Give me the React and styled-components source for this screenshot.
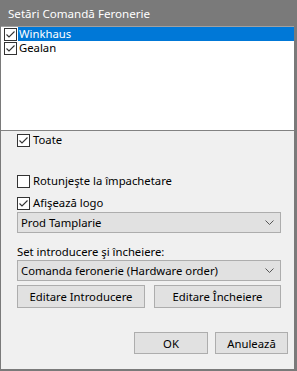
import styled, { createGlobalStyle } from 'styled-components';

const GlobalStyle = createGlobalStyle`
  body {
    margin: 0;
    font-family: "Segoe UI", "Noto Sans", sans-serif;
    font-size: 11.3px;
  }
`;

const Window = styled.div`
  width: 297px;
  height: 371px;
  box-sizing: border-box;
  background: #7a7a7a;
  padding: 0 3px 2px 1px;
  display: flex;
  flex-direction: column;
`;

const TitleBar = styled.div`
  height: 26px;
  flex-shrink: 0;
  display: flex;
  align-items: center;
  padding-left: 7px;
  color: #ffffff;
  font-size: 11.6px;
`;

const Body = styled.div`
  flex: 1;
  background: #f0f0f0;
  display: flex;
  flex-direction: column;
  color: #000;
  overflow: hidden;
`;

const ListBox = styled.div`
  height: 105px;
  flex-shrink: 0;
  box-sizing: border-box;
  background: #fff;
  border-top: 1px solid #a0a0a0;
  border-bottom: 1px solid #828282;
`;

const ListRow = styled.div`
  height: 14px;
  display: flex;
  align-items: center;
  padding-left: 3px;
`;

const ItemText = styled.span`
  flex: 1;
  margin-left: 1px;
  padding-left: 1px;
  height: 14px;
  line-height: 14px;
  background: ${({ selected }) => (selected ? '#0078d7' : 'transparent')};
  color: ${({ selected }) => (selected ? '#fff' : '#000')};
`;

const Content = styled.div`
  display: flex;
  flex-direction: column;
  padding: 0 13px 0 16px;
`;

const CheckRow = styled.label`
  display: flex;
  align-items: center;
  gap: 3px;
  height: 14px;
  line-height: 14px;
  margin-top: ${({ top }) => top}px;
`;

const Box = styled.span`
  width: 13px;
  height: 13px;
  box-sizing: border-box;
  border: 1px solid #333;
  background: #fff;
  display: flex;
  align-items: center;
  justify-content: center;
  flex-shrink: 0;
`;

const Combo = styled.div`
  height: 21px;
  box-sizing: border-box;
  border: 1px solid #adadad;
  background: #e1e1e1;
  display: flex;
  align-items: center;
  justify-content: space-between;
  padding: 0 6px 0 3px;
  margin-top: ${({ top }) => top}px;
`;

const FieldLabel = styled.div`
  margin-top: 11px;
  height: 16px;
  line-height: 16px;
`;

const ButtonRow = styled.div`
  display: flex;
  justify-content: ${({ end }) => (end ? 'flex-end' : 'space-between')};
  gap: ${({ end }) => (end ? '7px' : '0')};
  margin-top: ${({ top }) => top}px;
  padding-right: ${({ end }) => (end ? '6px' : '0')};
  margin-right: ${({ end }) => (end ? '-13px' : '0')};
`;

const Button = styled.button`
  width: ${({ w }) => w}px;
  height: ${({ h }) => h}px;
  border: 1px solid #adadad;
  background: #e1e1e1;
  font-family: inherit;
  font-size: 11.3px;
  color: #000;
  padding: 0;
`;

const Check = ({ checked }) => (
  <Box>
    {checked && (
      <svg width="11" height="11" viewBox="0 0 11 11">
        <path d="M1.5 5.5 L4 8 L9.5 2.5" fill="none" stroke="#333" strokeWidth="1.1" />
      </svg>
    )}
  </Box>
);

const Chevron = () => (
  <svg width="9" height="6" viewBox="0 0 9 6">
    <path d="M0.5 0.5 L4.5 4.5 L8.5 0.5" fill="none" stroke="#555" strokeWidth="1" />
  </svg>
);

export default function App() {
  return (
    <>
      <GlobalStyle />
      <Window>
        <TitleBar>Setări Comandă Feronerie</TitleBar>
        <Body>
          <ListBox>
            <ListRow>
              <Check checked />
              <ItemText selected>Winkhaus</ItemText>
            </ListRow>
            <ListRow>
              <Check checked />
              <ItemText>Gealan</ItemText>
            </ListRow>
          </ListBox>
          <Content>
            <CheckRow top={2}>
              <Check checked />
              <span>Toate</span>
            </CheckRow>
            <CheckRow top={27}>
              <Check />
              <span>Rotunjeşte la împachetare</span>
            </CheckRow>
            <CheckRow top={8}>
              <Check checked />
              <span>Afişează logo</span>
            </CheckRow>
            <Combo top={2}>
              <span>Prod Tamplarie</span>
              <Chevron />
            </Combo>
            <FieldLabel>Set introducere şi încheiere:</FieldLabel>
            <Combo top={0}>
              <span>Comanda feronerie (Hardware order)</span>
              <Chevron />
            </Combo>
            <ButtonRow top={4}>
              <Button w={128} h={23}>Editare Introducere</Button>
              <Button w={127} h={23}>Editare Încheiere</Button>
            </ButtonRow>
            <ButtonRow end top={24}>
              <Button w={74} h={22}>OK</Button>
              <Button w={73} h={22}>Anulează</Button>
            </ButtonRow>
          </Content>
        </Body>
      </Window>
    </>
  );
}
